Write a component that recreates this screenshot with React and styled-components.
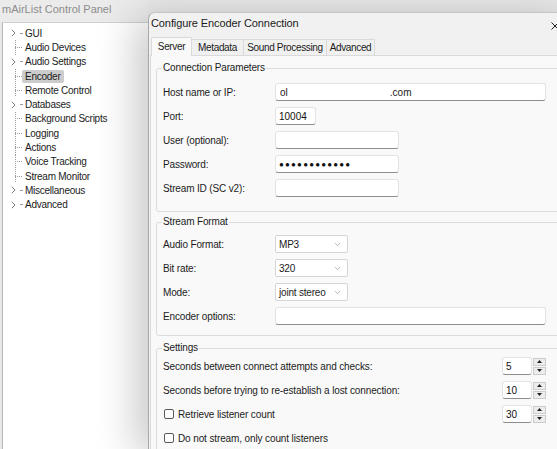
import styled, { createGlobalStyle, css } from "styled-components";
import { ChevronDown } from "lucide-react";

const GlobalStyle = createGlobalStyle`
  body {
    margin: 0;
    font-family: "Liberation Sans", Arial, sans-serif;
    font-size: 10px;
    color: #1b1b1b;
    background: #e9e9e9;
  }
`;

const treeItems = [
  { label: "GUI", folder: true },
  { label: "Audio Devices" },
  { label: "Audio Settings", folder: true },
  { label: "Encoder", selected: true },
  { label: "Remote Control" },
  { label: "Databases", folder: true },
  { label: "Background Scripts" },
  { label: "Logging" },
  { label: "Actions" },
  { label: "Voice Tracking" },
  { label: "Stream Monitor" },
  { label: "Miscellaneous", folder: true },
  { label: "Advanced", folder: true },
];

const tabs = [
  { label: "Server", w: 41, active: true },
  { label: "Metadata", w: 52 },
  { label: "Sound Processing", w: 83 },
  { label: "Advanced", w: 48 },
];

const Expander = () => (
  <ExpanderIcon width="5" height="8" viewBox="0 0 5 8">
    <path d="M0.8 0.8 L4 4 L0.8 7.2" fill="none" stroke="#7c7c7c" strokeWidth="1" />
  </ExpanderIcon>
);

const SpinArrows = () => (
  <SpinButtons>
    <SpinButton>
      <svg width="5" height="3" viewBox="0 0 5 3">
        <polygon points="0,3 2.5,0 5,3" fill="#222" />
      </svg>
    </SpinButton>
    <SpinButton>
      <svg width="5" height="3" viewBox="0 0 5 3">
        <polygon points="0,0 5,0 2.5,3" fill="#222" />
      </svg>
    </SpinButton>
  </SpinButtons>
);

const Spin = ({ value }) => (
  <SpinBox>
    <TextBox $w={30} readOnly value={value} />
    <SpinArrows />
  </SpinBox>
);

const Combo = ({ value }) => (
  <ComboBox>
    <span>{value}</span>
    <ChevronDown size={9} strokeWidth={1.4} color="#707070" />
  </ComboBox>
);

const App = () => {
  return (
    <>
      <GlobalStyle />
      <Screen>
        <ControlPanel>
          <PanelTitle>mAirList Control Panel</PanelTitle>
          <TreePane>
            {treeItems.map((item) => (
              <TreeRow key={item.label}>
                <Gutter $folder={item.folder}>
                  {item.folder && <Expander />}
                  <Stub $short={item.folder} />
                </Gutter>
                <TreeLabel $selected={item.selected}>{item.label}</TreeLabel>
              </TreeRow>
            ))}
          </TreePane>
        </ControlPanel>

        <Dialog>
          <TitleBar>
            <DialogTitle>Configure Encoder Connection</DialogTitle>
            <CloseButton>
              <svg width="8" height="8" viewBox="0 0 8 8">
                <path d="M0.5 0.5 L7.5 7.5 M7.5 0.5 L0.5 7.5" stroke="#222" strokeWidth="1" />
              </svg>
            </CloseButton>
          </TitleBar>

          <TabStrip>
            {tabs.map((t) => (
              <Tab key={t.label} $w={t.w} $active={t.active}>
                {t.label}
              </Tab>
            ))}
          </TabStrip>

          <TabPanel>
            <Group $padTop={6} $padBottom={11}>
              <Legend>Connection Parameters</Legend>
              <FormRow>
                <FieldLabel>Host name or IP:</FieldLabel>
                <HostField>
                  <span>ol</span>
                  <Redacted />
                  <span>.com</span>
                </HostField>
              </FormRow>
              <FormRow>
                <FieldLabel>Port:</FieldLabel>
                <TextBox $w={41} readOnly value="10004" />
              </FormRow>
              <FormRow>
                <FieldLabel>User (optional):</FieldLabel>
                <TextBox $w={124} readOnly value="" />
              </FormRow>
              <FormRow>
                <FieldLabel>Password:</FieldLabel>
                <TextBox $w={124} $dots readOnly value={"\u25CF".repeat(12)} />
              </FormRow>
              <FormRow>
                <FieldLabel>Stream ID (SC v2):</FieldLabel>
                <TextBox $w={124} readOnly value="" />
              </FormRow>
            </Group>

            <Group $padTop={4} $padBottom={7}>
              <Legend>Stream Format</Legend>
              <FormRow>
                <FieldLabel>Audio Format:</FieldLabel>
                <Combo value="MP3" />
              </FormRow>
              <FormRow>
                <FieldLabel>Bit rate:</FieldLabel>
                <Combo value="320" />
              </FormRow>
              <FormRow>
                <FieldLabel>Mode:</FieldLabel>
                <Combo value="joint stereo" />
              </FormRow>
              <FormRow>
                <FieldLabel>Encoder options:</FieldLabel>
                <TextBox $w={271} readOnly value="" />
              </FormRow>
            </Group>

            <Group $padTop={0} $padBottom={10} $spaced>
              <Legend>Settings</Legend>
              <SettingRow>
                <span>Seconds between connect attempts and checks:</span>
                <Spin value="5" />
              </SettingRow>
              <SettingRow>
                <span>Seconds before trying to re-establish a lost connection:</span>
                <Spin value="10" />
              </SettingRow>
              <SettingRow>
                <CheckLabel>
                  <CheckBox />
                  Retrieve listener count
                </CheckLabel>
                <Spin value="30" />
              </SettingRow>
              <SettingRow>
                <CheckLabel>
                  <CheckBox />
                  Do not stream, only count listeners
                </CheckLabel>
              </SettingRow>
            </Group>
          </TabPanel>
        </Dialog>
      </Screen>
    </>
  );
};

export default App;

const Screen = styled.div`
  display: flex;
  width: 557px;
  height: 449px;
  overflow: hidden;
  background: #e8e8e8;
`;

const ControlPanel = styled.div`
  width: 148px;
  flex-shrink: 0;
  display: flex;
  flex-direction: column;
`;

const PanelTitle = styled.div`
  height: 22px;
  line-height: 19px;
  padding-left: 2px;
  font-size: 11px;
  color: #8c8c8c;
  background: #ebebeb;
  white-space: nowrap;
  box-sizing: border-box;
`;

const TreePane = styled.div`
  flex: 1;
  margin-left: 2px;
  padding-top: 3px;
  background: #fff;
  border-left: 1px solid #b8b8b8;
  border-top: 1px solid #cfcfcf;
`;

const TreeRow = styled.div`
  display: flex;
  align-items: center;
  height: 14.3px;
  letter-spacing: -0.25px;
`;

const Gutter = styled.div`
  width: 19px;
  flex-shrink: 0;
  align-self: stretch;
  display: flex;
  align-items: center;
  box-sizing: border-box;
  padding-left: ${(p) => (p.$folder ? "8px" : "12px")};
  background-image: ${(p) =>
    p.$folder
      ? "none"
      : "linear-gradient(to bottom, #9a9a9a 50%, transparent 50%)"};
  background-size: 1px 2px;
  background-repeat: repeat-y;
  background-position: 12px 0;
`;

const ExpanderIcon = styled.svg`
  flex-shrink: 0;
  display: block;
`;

const Stub = styled.span`
  flex: 1;
  height: 0;
  margin-left: ${(p) => (p.$short ? "4px" : "0")};
  border-top: 1px dotted #9a9a9a;
`;

const TreeLabel = styled.span`
  padding: 1px 3px;
  border-radius: 2px;
  white-space: nowrap;
  ${(p) =>
    p.$selected &&
    css`
      background: #cccccc;
    `}
`;

const Dialog = styled.div`
  width: 430px;
  flex-shrink: 0;
  margin-top: 12px;
  display: flex;
  flex-direction: column;
  background: #f1f1f1;
  border-top: 1px solid #c6c6c6;
  border-left: 1px solid #a8a8a8;
  border-top-left-radius: 7px;
  box-shadow: -12px 6px 40px rgba(0, 0, 0, 0.22);
`;

const TitleBar = styled.div`
  height: 28px;
  display: flex;
  align-items: flex-start;
  justify-content: space-between;
`;

const DialogTitle = styled.div`
  padding: 4px 0 0 2px;
  font-size: 11px;
  letter-spacing: -0.1px;
  white-space: nowrap;
`;

const CloseButton = styled.div`
  width: 46px;
  height: 22px;
  margin-right: 1px;
  display: flex;
  align-items: center;
  justify-content: center;
  padding-top: 2px;
`;

const TabStrip = styled.div`
  display: flex;
  align-items: flex-end;
  height: 18px;
  padding-left: 2px;
`;

const Tab = styled.div`
  width: ${(p) => p.$w}px;
  height: 16px;
  display: flex;
  align-items: center;
  justify-content: center;
  box-sizing: border-box;
  border: 1px solid #dadada;
  border-bottom: none;
  border-left-width: 0;
  background: #f0f0f0;
  white-space: nowrap;
  letter-spacing: -0.35px;
  ${(p) =>
    p.$active &&
    css`
      position: relative;
      z-index: 1;
      height: 19px;
      margin-bottom: -1px;
      padding-bottom: 2px;
      border-left-width: 1px;
      border-radius: 2px 2px 0 0;
      background: #f9f9f9;
    `}
`;

const TabPanel = styled.div`
  flex: 1;
  margin-left: 1px;
  padding: 6px 6px 0 5px;
  display: flex;
  flex-direction: column;
  gap: 4px;
  background: #f9f9f9;
  border-top: 1px solid #dadada;
  border-left: 1px solid #dadada;
`;

const Group = styled.fieldset`
  margin: ${(p) => (p.$spaced ? "2px 0 0" : "0")};
  padding: ${(p) => p.$padTop}px 6px ${(p) => p.$padBottom}px;
  border: 1px solid #dcdcdc;
  border-radius: 3px;
  min-width: 0;
`;

const Legend = styled.legend`
  padding: 0 1px;
  margin-left: -1px;
  line-height: 12px;
  letter-spacing: -0.15px;
`;

const FormRow = styled.div`
  display: flex;
  align-items: center;
  height: 24px;
`;

const FieldLabel = styled.span`
  width: 112px;
  flex-shrink: 0;
  white-space: nowrap;
  letter-spacing: -0.15px;
`;

const fieldBox = css`
  height: 18px;
  box-sizing: border-box;
  background: #fff;
  border: 1px solid #e3e3e3;
  border-bottom-color: #8d8d8d;
  border-radius: 3px;
`;

const TextBox = styled.input`
  ${fieldBox}
  width: ${(p) => p.$w}px;
  padding: 0 3px;
  margin: 0;
  font: inherit;
  color: #111;
  outline: none;
  ${(p) =>
    p.$dots &&
    css`
      font-size: 8px;
      letter-spacing: 1.2px;
    `}
`;

const HostField = styled.div`
  ${fieldBox}
  width: 271px;
  display: flex;
  align-items: center;
  padding: 0 4px;
`;

const Redacted = styled.span`
  width: 102px;
`;

const ComboBox = styled.div`
  width: 73px;
  height: 18px;
  box-sizing: border-box;
  display: flex;
  align-items: center;
  justify-content: space-between;
  padding: 0 5px 0 3px;
  background: #fff;
  border: 1px solid #d5d5d5;
  border-radius: 2px;
  letter-spacing: -0.2px;
`;

const SettingRow = styled.div`
  width: 383px;
  height: 24px;
  display: flex;
  align-items: center;
  justify-content: space-between;
  white-space: nowrap;
  letter-spacing: -0.12px;
`;

const CheckLabel = styled.label`
  display: flex;
  align-items: center;
  gap: 4px;
`;

const CheckBox = styled.span`
  width: 10px;
  height: 10px;
  margin-left: 1px;
  box-sizing: border-box;
  border: 1px solid #5a5a5a;
  border-radius: 2px;
  background: #fff;
`;

const SpinBox = styled.div`
  display: flex;
  align-items: center;
  gap: 1px;
`;

const SpinButtons = styled.div`
  display: flex;
  flex-direction: column;
  gap: 1px;
`;

const SpinButton = styled.div`
  width: 13px;
  height: 8px;
  box-sizing: border-box;
  display: flex;
  align-items: center;
  justify-content: center;
  background: #ececec;
  border: 1px solid #cbcbcb;
`;
